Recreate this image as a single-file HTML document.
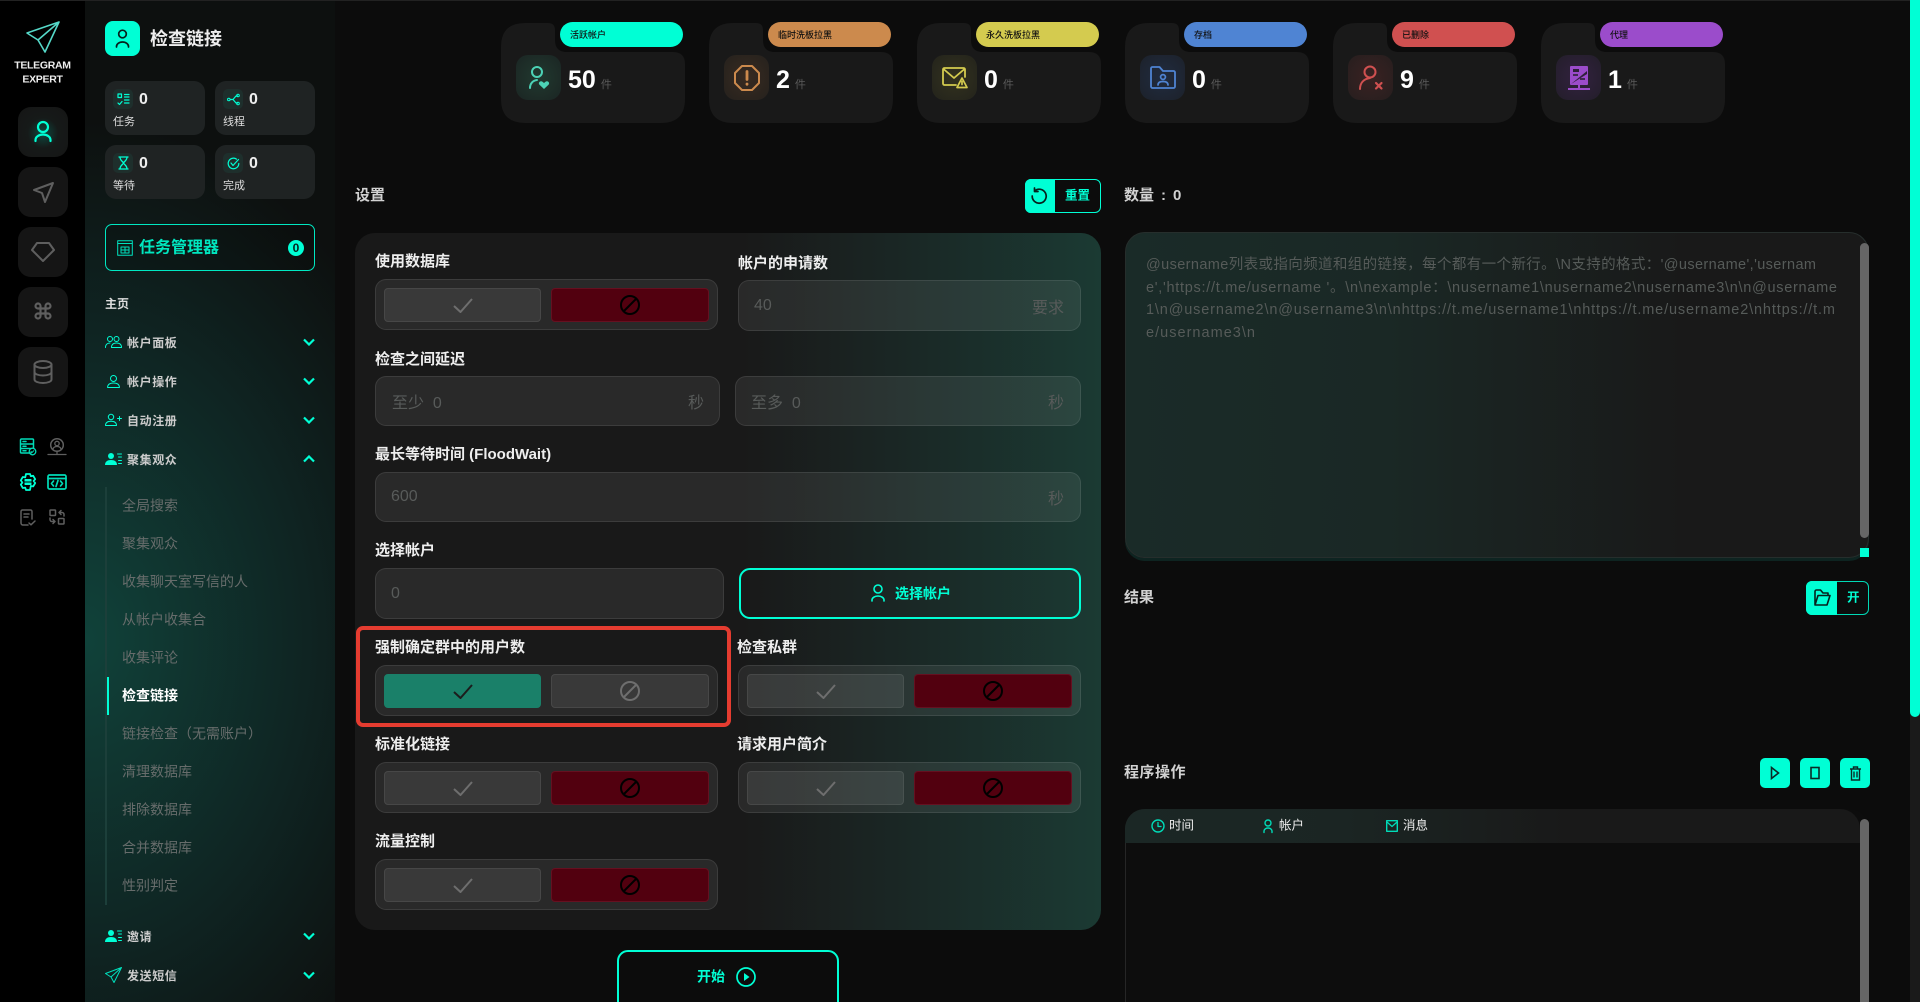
<!DOCTYPE html>
<html lang="zh-CN"><head><meta charset="utf-8"><title>检查链接</title>
<style>
*{box-sizing:border-box}
html,body{margin:0;padding:0;width:1920px;height:1002px;overflow:hidden;background:#0c0c0c;font-family:"Liberation Sans","Noto Sans CJK SC",sans-serif;color:#fff}
#w{position:relative;width:1920px;height:1002px;overflow:hidden;background:#0c0c0c}
.a{position:absolute}
.t{position:absolute;transform:translateY(-50%);white-space:nowrap;line-height:1.2}
svg{display:block;overflow:visible}
.s{fill:none;stroke:currentColor;stroke-linecap:round;stroke-linejoin:round}
.rb{position:absolute;left:18px;width:50px;height:50px;border-radius:13px;background:#151515}
.mini{position:absolute;width:100px;height:54px;border-radius:11px;background:#1f2323}
.mini .ic{position:absolute;left:8px;top:8px;width:20px;height:20px;border-radius:5px;background:#1e2f2c;color:#00ffd5;display:flex;align-items:center;justify-content:center}
.mini b{position:absolute;left:34px;top:9px;font-size:16px;line-height:20px;font-weight:700;color:#eee}
.mini span{position:absolute;left:8px;top:34px;font-size:11px;line-height:15px;color:#ddd}
.mh{font-size:12px;font-weight:700;letter-spacing:.6px;color:#ccc;left:127px}
.sub{font-size:14px;color:#676c6b;left:122px}
.chev{position:absolute;left:303px;width:12px;height:8px;color:#00ffd5}
.stat{position:absolute;top:23px;width:184px;height:100px}
.stat .pill{position:absolute;left:59px;top:-1px;width:123px;height:25px;border-radius:12.5px;font-size:9px;font-weight:500;line-height:26px;padding-left:10px;color:#111}
.stat .tile{position:absolute;left:15px;top:32px;width:45px;height:45px;border-radius:12px;display:flex;align-items:center;justify-content:center}
.stat .num{position:absolute;left:67px;top:44px;line-height:26px;font-size:25px;font-weight:700;white-space:nowrap}
.stat .num small{font-size:11px;font-weight:400;color:#5a5a5a;margin-left:5px;vertical-align:0}
.lb{font-size:15px;font-weight:700;color:#eee;margin-top:1.5px}
.h{font-size:15px;font-weight:700;color:#d2d2d2}
.tg,.inp{position:absolute;background:rgba(255,255,255,.07);border:1px solid rgba(255,255,255,.09);border-radius:11px;height:51px}
.tg{width:343px}
.tg i{position:absolute;top:8px;height:34px;border-radius:4px;display:flex;align-items:center;justify-content:center;background:rgba(255,255,255,.08);border:1px solid rgba(255,255,255,.07);color:#6e6e6e}
.tg i.y{left:8px;width:157px}.tg i.n{left:175px;width:158px}
.tg i.r{background:#52000f;border-color:#651020;color:#000}
.tg i.g{background:#1a8069;border-color:#1a8069;color:#1c1c1c}
.inp{font-size:16px;color:#585b5a}
.inp span{position:absolute;top:50%;transform:translateY(-50%);white-space:nowrap}
.tbtn{position:absolute;background:#00ffd5;border-radius:5px;width:30px;height:30px;top:758px;display:flex;align-items:center;justify-content:center;color:#0b2b27}
</style></head><body><div id="w">
<svg width="0" height="0" style="position:absolute"><defs>
<symbol id="ck" viewBox="0 0 20 15"><path d="M1 8l6.5 6L19 1" fill="none" stroke="currentColor" stroke-width="2"/></symbol>
<symbol id="ban" viewBox="0 0 20 20"><circle cx="10" cy="10" r="9" fill="none" stroke="currentColor" stroke-width="2"/><path d="M16 4L4 16" fill="none" stroke="currentColor" stroke-width="2"/></symbol>
<symbol id="dn" viewBox="0 0 12 8"><path d="M1 1.5l5 5 5-5" fill="none" stroke="currentColor" stroke-width="2.2"/></symbol>
<symbol id="card" viewBox="0 0 184 100"><path d="M24 0H47Q54 0 54 7V17Q54 29 66 29H172Q184 29 184 41V76Q184 100 160 100H24Q0 100 0 76V24Q0 0 24 0Z" fill="#191919"/></symbol>
</defs></svg>

<!-- left rail -->
<div class="a" style="left:0;top:0;width:85px;height:1002px;background:#000"></div>
<!-- sidebar -->
<div class="a" style="left:85px;top:0;width:250px;height:1002px;background:radial-gradient(ellipse 370px 520px at 0 640px,#10423a 0%,#0f2422 60%,#0d100f 100%),#0d100f"></div>
<div class="a" style="left:0;top:0;width:1920px;height:1px;background:#222"></div>

<svg class="a" style="left:26px;top:20px;color:#55d8c8" width="36" height="34" viewBox="0 0 36 34"><path class="s" stroke-width="1.6" d="M33 2L1 13l11 7 7 12zM33 2L12 20"/></svg>
<div class="t" style="left:0;width:85px;text-align:center;top:66px;font-size:10.5px;font-weight:700;color:#eee;letter-spacing:-.3px">TELEGRAM</div>
<div class="t" style="left:0;width:85px;text-align:center;top:80px;font-size:10.5px;font-weight:700;color:#eee;letter-spacing:-.3px">EXPERT</div>

<div class="rb" style="top:107px;background:radial-gradient(circle at 50% 52%,#0d4a40 0,#161a19 42%,#151515 100%)"><svg class="a" style="left:16px;top:13px;color:#00ffd5" width="18" height="24" viewBox="0 0 18 24"><circle class="s" stroke-width="2.2" cx="9" cy="7" r="5"/><path class="s" stroke-width="2.2" d="M1.5 21v-1a7.5 5.5 0 0 1 15 0v1"/></svg></div>
<div class="rb" style="top:167px"><svg class="a" style="left:15px;top:15px;color:#5f5f5f" width="21" height="21" viewBox="0 0 21 21"><path class="s" stroke-width="2" d="M20 1L1 8l8 3 3 9z"/></svg></div>
<div class="rb" style="top:227px"><svg class="a" style="left:13px;top:15px;color:#5f5f5f" width="24" height="20" viewBox="0 0 24 20"><path class="s" stroke-width="2" d="M6 1h12l5 7-11 11L1 8z"/></svg></div>
<div class="rb" style="top:287px"><svg class="a" style="left:15px;top:14px;color:#5f5f5f" width="20" height="20" viewBox="0 0 24 24"><path class="s" stroke-width="2.6" d="M15 6v12a3 3 0 1 0 3-3H6a3 3 0 1 0 3 3V6a3 3 0 1 0-3 3h12a3 3 0 1 0-3-3"/></svg></div>
<div class="rb" style="top:347px"><svg class="a" style="left:15px;top:13px;color:#5f5f5f" width="20" height="24" viewBox="0 0 20 24"><ellipse class="s" stroke-width="2" cx="10" cy="4.5" rx="8.5" ry="3.5"/><path class="s" stroke-width="2" d="M1.5 4.5v15c0 2 3.8 3.5 8.500 3.500s8.500-1.500 8.500-3.500v-15M1.500 12c0 2 3.800 3.500 8.500 3.500s8.500-1.500 8.500-3.500"/></svg></div>

<svg class="a" style="left:19px;top:438px;color:#00dcb8" width="18" height="18" viewBox="0 0 18 18"><path class="s" stroke-width="1.500" d="M12 15H2.500a1 1 0 0 1-1-1V2a1 1 0 0 1 1-1h11a1 1 0 0 1 1 1v8M1.500 6h13M1.500 10.500h10M4 3.500h3M4 8.200h3M4 12.800h3"/><circle class="s" stroke-width="1.300" cx="13.500" cy="13.500" r="3.300"/><path class="s" d="M12 13.500l1 1 1.800-1.800"/></svg>
<svg class="a" style="left:48px;top:438px;color:#5f5f5f" width="18" height="18" viewBox="0 0 18 18"><circle class="s" stroke-width="1.500" cx="9" cy="7" r="6.300"/><circle class="s" stroke-width="1.300" cx="9" cy="5.500" r="2.200"/><path class="s" stroke-width="1.300" d="M5 11c.6-2 2-2.500 4-2.500s3.400.5 4 2.500M0 16.500h18M9 13v3.500"/></svg>
<svg class="a" style="left:19px;top:473px;color:#00ffd5" width="18" height="18" viewBox="0 0 18 18"><path class="s" stroke-width="1.800" d="M7 1h4l.8 2.200 2.400-.4 2 3.400-1.600 1.800 1.600 2-2 3.400-2.400-.4L11 17H7l-.8-2.400-2.400.4-2-3.400L3.400 9.600 1.800 7.400l2-3.400 2.400.4z"/><rect x="5.500" y="6" width="7" height="6" rx=".6" fill="#00ffd5"/><path d="M5.500 9h7" stroke="#000" stroke-width="1"/></svg>
<svg class="a" style="left:47px;top:474px;color:#00dcb8" width="20" height="16" viewBox="0 0 20 16"><rect class="s" stroke-width="1.700" x="1" y="1" width="18" height="14" rx="1.500"/><path class="s" stroke-width="1.700" d="M1 4.500h18M6.500 7l-2 2.500 2 2.500M13.500 7l2 2.500-2 2.500M11 6.500L9 12.500"/></svg>
<svg class="a" style="left:20px;top:509px;color:#5f5f5f" width="16" height="17" viewBox="0 0 16 17"><path class="s" stroke-width="1.500" d="M8 16H3a2 2 0 0 1-2-2V2.500A1.500 1.500 0 0 1 2.500 1h8A1.500 1.500 0 0 1 12 2.500V10M4 5h5M4 8h4M9 14l2 1.800 4-3.800"/></svg>
<svg class="a" style="left:49px;top:509px;color:#5f5f5f" width="16" height="16" viewBox="0 0 16 16"><rect class="s" stroke-width="1.500" x="1" y="1" width="5.500" height="5.500" rx=".6"/><rect class="s" stroke-width="1.500" x="9.500" y="9.500" width="5.500" height="5.500" rx=".6"/><path class="s" stroke-width="1.500" d="M10 3.500l2-2M10 3.500h3a2 2 0 0 1 2 2V7M10 3.500l2 2M6 12.500l-2 2M6 12.500H3a2 2 0 0 1-2-2V9M6 12.500l-2-2"/></svg>

<!-- sidebar content -->
<div class="a" style="left:105px;top:21px;width:35px;height:35px;border-radius:8px;background:#00ffd5"><svg class="a" style="left:10px;top:8px;color:#06201c" width="15" height="20" viewBox="0 0 15 20"><circle class="s" stroke-width="1.700" cx="7.500" cy="5" r="3.800"/><path class="s" stroke-width="1.700" d="M1.500 18v-.500a6 4.500 0 0 1 12 0v.500"/></svg></div>
<div class="t" style="left:150px;top:40px;font-size:18px;font-weight:700;color:#eee">检查链接</div>

<div class="mini" style="left:105px;top:81px"><div class="ic"><svg width="13" height="13" viewBox="0 0 13 13"><path class="s" stroke-width="1.200" d="M1 1h3.500v3.500H1zM7.500 1.500H12M7.500 4H12M7.500 7H12M7.500 10H12M1 10l1.500 1.500L5 8.500"/></svg></div><b>0</b><span>任务</span></div>
<div class="mini" style="left:215px;top:81px"><div class="ic"><svg width="13" height="13" viewBox="0 0 13 13"><path class="s" stroke-width="1.200" d="M3 6.500h3l3-3.500h1.500M6 6.500l3 3.500h1.500"/><circle cx="1.800" cy="6.500" r="1.300" class="s"/><circle cx="11" cy="2.500" r="1.300" class="s"/><circle cx="11" cy="10.500" r="1.300" class="s"/></svg></div><b>0</b><span>线程</span></div>
<div class="mini" style="left:105px;top:145px"><div class="ic"><svg width="11" height="14" viewBox="0 0 11 14"><path class="s" stroke-width="1.300" d="M1 1h9M1 13h9M2 1c0 3.500 2.500 4 3.500 6 1-2 3.500-2.500 3.500-6M2 13c0-3.500 2.500-4 3.500-6 1 2 3.500 2.500 3.500 6"/></svg></div><b>0</b><span>等待</span></div>
<div class="mini" style="left:215px;top:145px"><div class="ic"><svg width="13" height="13" viewBox="0 0 13 13"><path class="s" stroke-width="1.200" d="M11.800 6.500a5.300 5.300 0 1 1-2.300-4.400M4 6l2 2.500 5.500-6"/></svg></div><b>0</b><span>完成</span></div>

<div class="a" style="left:105px;top:224px;width:210px;height:47px;border:1.500px solid #00e8c2;border-radius:7px;background:rgba(0,0,0,.12)"></div>
<svg class="a" style="left:117px;top:240px;color:#00e0bd" width="16" height="16" viewBox="0 0 16 16"><rect class="s" x=".7" y=".7" width="14.600" height="14.600"/><path class="s" d="M.7 3.500h14.600M4 7h8M4 10h8M4 13h8M4 7v6M12 7v6M8 7v6"/></svg>
<div class="t" style="left:139px;top:248px;font-size:16px;font-weight:700;color:#00e6bf">任务管理器</div>
<div class="a" style="left:288px;top:240px;width:16px;height:16px;border-radius:8px;background:#00ffd5;color:#06201c;font-size:12px;font-weight:700;line-height:16px;text-align:center">0</div>

<div class="t" style="left:105px;top:304px;font-size:12px;font-weight:700;color:#ddd">主页</div>

<svg class="a" style="left:105px;top:336px;color:#00ffd5" width="17" height="12" viewBox="0 0 17 12"><circle class="s" cx="5" cy="3" r="2.500"/><circle class="s" cx="11.500" cy="3" r="2.500"/><path class="s" d="M.5 11.500c0-3 2-4.500 4.500-4.500M6.500 11.500c0-3 2-4.500 5-4.500s5 1.500 5 4.500z"/></svg>
<div class="t mh" style="top:343px">帐户面板</div><svg class="chev" style="top:338px"><use href="#dn"/></svg>
<svg class="a" style="left:107px;top:375px;color:#00ffd5" width="13" height="13" viewBox="0 0 13 13"><circle class="s" cx="6.500" cy="3.500" r="3"/><path class="s" d="M.6 12.500c0-3 2-4.500 5.900-4.500s5.900 1.500 5.900 4.500z"/></svg>
<div class="t mh" style="top:382px">帐户操作</div><svg class="chev" style="top:377px"><use href="#dn"/></svg>
<svg class="a" style="left:105px;top:414px;color:#00ffd5" width="17" height="12" viewBox="0 0 17 12"><circle class="s" cx="6" cy="3" r="2.700"/><path class="s" d="M.5 11.500c0-3 2-4.300 5.500-4.300s5.500 1.300 5.500 4.300zM12.500 4.500h4M14.500 2.500v4"/></svg>
<div class="t mh" style="top:421px">自动注册</div><svg class="chev" style="top:416px"><use href="#dn"/></svg>
<svg class="a" style="left:105px;top:453px;color:#00ffd5" width="17" height="12" viewBox="0 0 17 12"><circle cx="6" cy="3" r="3" fill="currentColor"/><path fill="currentColor" d="M0 12c0-3.500 2.500-5 6-5s6 1.500 6 5z"/><path class="s" d="M12.500 1h4M13.500 4h3M13.500 7.500h3M13.500 10.500h3"/></svg>
<div class="t mh" style="top:460px">聚集观众</div><svg class="chev" style="top:455px;transform:scaleY(-1)"><use href="#dn"/></svg>

<div class="a" style="left:105px;top:487px;width:2px;height:418px;background:#1c3f3a"></div>
<div class="a" style="left:107px;top:677px;width:2px;height:38px;background:#00ffd5"></div>
<div class="t sub" style="top:506px">全局搜索</div>
<div class="t sub" style="top:544px">聚集观众</div>
<div class="t sub" style="top:582px">收集聊天室写信的人</div>
<div class="t sub" style="top:620px">从帐户收集合</div>
<div class="t sub" style="top:658px">收集评论</div>
<div class="t sub" style="top:696px;color:#fff;font-weight:700">检查链接</div>
<div class="t sub" style="top:734px">链接检查（无需账户）</div>
<div class="t sub" style="top:772px">清理数据库</div>
<div class="t sub" style="top:810px">排除数据库</div>
<div class="t sub" style="top:848px">合并数据库</div>
<div class="t sub" style="top:886px">性别判定</div>

<svg class="a" style="left:105px;top:930px;color:#00ffd5" width="17" height="12" viewBox="0 0 17 12"><circle cx="6" cy="3" r="3" fill="currentColor"/><path fill="currentColor" d="M0 12c0-3.500 2.500-5 6-5s6 1.500 6 5z"/><path class="s" d="M12.500 1h4M13.500 4h3M13.500 7.500h3M13.500 10.500h3"/></svg>
<div class="t mh" style="top:937px">邀请</div><svg class="chev" style="top:932px"><use href="#dn"/></svg>
<svg class="a" style="left:105px;top:967px;color:#00e0bd" width="17" height="16" viewBox="0 0 17 16"><path class="s" d="M16.500.5L.5 6.500l5.500 3.500 3 5.500zM16.500.5L6 10"/></svg>
<div class="t mh" style="top:976px">发送短信</div><svg class="chev" style="top:971px"><use href="#dn"/></svg>

<!-- stat cards -->
<div class="stat" style="left:501px"><svg width="184" height="100"><use href="#card"/></svg><div class="pill" style="background:#00ffd5">活跃帐户</div><div class="tile" style="background:radial-gradient(circle,#21392f,#1b2523)"><svg width="24" height="26" viewBox="0 0 24 26" style="color:#4cd2b5"><circle class="s" stroke-width="2" cx="10" cy="7" r="5"/><path class="s" stroke-width="2" d="M3 23c0-4 2.500-7.500 7-8"/><path fill="currentColor" d="M17 24l-4.500-4.200c-1.800-2 .8-4.800 3-3l1.500 1.200 1.500-1.200c2.200-1.800 4.800 1 3 3z"/></svg></div><div class="num">50<small>件</small></div></div>

<div class="stat" style="left:709px"><svg width="184" height="100"><use href="#card"/></svg><div class="pill" style="background:#cc8a4d">临时洗板拉黑</div><div class="tile" style="background:radial-gradient(circle,#382b21,#25211d)"><svg width="26" height="26" viewBox="0 0 26 26" style="color:#cc8a4d"><path class="s" stroke-width="2" d="M8 1h10l7 7v10l-7 7H8l-7-7V8z"/><path class="s" stroke-width="2.800" d="M13 6.500v8M13 19v.2"/></svg></div><div class="num">2<small>件</small></div></div>

<div class="stat" style="left:917px"><svg width="184" height="100"><use href="#card"/></svg><div class="pill" style="background:#d4cb4f">永久洗板拉黑</div><div class="tile" style="background:radial-gradient(circle,#33321e,#23231c)"><svg width="26" height="22" viewBox="0 0 26 22" style="color:#d4cb4f"><path class="s" stroke-width="1.800" d="M14 18H2.500a1.500 1.500 0 0 1-1.500-1.500V2.500A1.500 1.500 0 0 1 2.500 1h19A1.500 1.500 0 0 1 23 2.500V10M1.500 2l10.500 9 10.500-9"/><path class="s" stroke-width="1.700" d="M20 11l-5 9.500h10zM20 14.500v3"/></svg></div><div class="num">0<small>件</small></div></div>

<div class="stat" style="left:1125px"><svg width="184" height="100"><use href="#card"/></svg><div class="pill" style="background:#4f84d3">存档</div><div class="tile" style="background:radial-gradient(circle,#212c40,#1c212a)"><svg width="26" height="23" viewBox="0 0 26 23" style="color:#4f84d3"><path class="s" stroke-width="1.800" d="M1 2.500A1.500 1.500 0 0 1 2.500 1h7L13 5h10.500A1.500 1.500 0 0 1 25 6.500v14a1.500 1.500 0 0 1-1.500 1.500h-21A1.500 1.500 0 0 1 1 20.500z"/><circle class="s" stroke-width="1.700" cx="13" cy="11" r="2.400"/><path class="s" stroke-width="1.700" d="M8 19c0-2.500 2-3.500 5-3.500s5 1 5 3.500"/></svg></div><div class="num">0<small>件</small></div></div>

<div class="stat" style="left:1333px"><svg width="184" height="100"><use href="#card"/></svg><div class="pill" style="background:#d05050">已删除</div><div class="tile" style="background:radial-gradient(circle,#3a2222,#261e1e)"><svg width="24" height="25" viewBox="0 0 24 25" style="color:#d05050"><circle class="s" stroke-width="2" cx="11" cy="7" r="5.500"/><path class="s" stroke-width="2" d="M1 24c0-6 3.500-10 10-11"/><path class="s" stroke-width="2.200" d="M17 18l5.500 5.500M22.500 18L17 23.500"/></svg></div><div class="num">9<small>件</small></div></div>

<div class="stat" style="left:1541px"><svg width="184" height="100"><use href="#card"/></svg><div class="pill" style="background:#9b4ccb">代理</div><div class="tile" style="background:radial-gradient(circle,#32213f,#231e2a)"><svg width="22" height="26" viewBox="0 0 22 26" style="color:#9b4ccb"><path fill="currentColor" fill-rule="evenodd" d="M3 1h16a1 1 0 0 1 1 1v17a1 1 0 0 1-1 1H3a1 1 0 0 1-1-1V2a1 1 0 0 1 1-1zM5 4v3h6V4zM3 19L19 9V6z"/><path stroke="currentColor" stroke-width="2" d="M0 24h22M11 20v5"/><path stroke="#231e2a" stroke-width="1.500" d="M12 14h5M5 10h5"/></svg></div><div class="num">1<small>件</small></div></div>

<!-- settings header -->
<div class="t h" style="left:355px;top:196px">设置</div>
<div class="a" style="left:1025px;top:179px;width:76px;height:34px;border:1px solid #00ffd5;border-radius:6px"></div>
<div class="a" style="left:1025px;top:179px;width:30px;height:34px;background:#00ffd5;border-radius:6px 0 0 6px"><svg class="a" style="left:6px;top:8px;color:#06201c" width="17" height="18" viewBox="0 0 17 18"><path class="s" stroke-width="1.700" d="M3.500 4a7 7 0 1 1-2.300 5M3.500 1v3.500H7"/></svg></div>
<div class="t" style="left:1065px;top:196px;font-size:12.500px;font-weight:700;color:#00ffd5">重置</div>

<!-- panel -->
<div class="a" style="left:355px;top:233px;width:746px;height:697px;border-radius:20px;background:linear-gradient(90deg,#191919 0%,#191919 52%,#1a2624 72%,#1b3a33 100%)"></div>

<div class="t lb" style="left:375px;top:260px">使用数据库</div>
<div class="t lb" style="left:738px;top:262px">帐户的申请数</div>
<div class="tg" style="left:375px;top:279px"><i class="y"><svg width="20" height="15"><use href="#ck"/></svg></i><i class="n r"><svg width="20" height="20"><use href="#ban"/></svg></i></div>
<div class="inp" style="left:738px;top:280px;width:343px"><span style="left:15px">40</span><span style="right:16px">要求</span></div>

<div class="t lb" style="left:375px;top:358px">检查之间延迟</div>
<div class="inp" style="left:375px;top:376px;width:345px;height:50px"><span style="left:16px">至少&nbsp;&nbsp;0</span><span style="right:15px">秒</span></div>
<div class="inp" style="left:735px;top:376px;width:346px;height:50px"><span style="left:15px">至多&nbsp;&nbsp;0</span><span style="right:16px">秒</span></div>

<div class="t lb" style="left:375px;top:453px">最长等待时间 (FloodWait)</div>
<div class="inp" style="left:375px;top:472px;width:706px;height:50px"><span style="left:15px">600</span><span style="right:16px">秒</span></div>

<div class="t lb" style="left:375px;top:549px">选择帐户</div>
<div class="inp" style="left:375px;top:568px;width:349px"><span style="left:15px">0</span></div>
<div class="a" style="left:739px;top:568px;width:342px;height:51px;border:2px solid #00ffd5;border-radius:11px"></div>
<svg class="a" style="left:871px;top:584px;color:#00ffd5" width="14" height="18" viewBox="0 0 14 18"><circle class="s" stroke-width="1.600" cx="7" cy="5" r="4"/><path class="s" stroke-width="1.600" d="M1 17v-1a6 4 0 0 1 12 0v1"/></svg>
<div class="t" style="left:895px;top:594px;font-size:14px;font-weight:700;color:#00ffd5">选择帐户</div>

<div class="a" style="left:356px;top:626px;width:375px;height:101px;border:4px solid #e53c30;border-radius:7px"></div>
<div class="t lb" style="left:375px;top:646px">强制确定群中的用户数</div>
<div class="t lb" style="left:737px;top:646px">检查私群</div>
<div class="tg" style="left:375px;top:665px"><i class="y g"><svg width="20" height="15"><use href="#ck"/></svg></i><i class="n"><svg width="20" height="20"><use href="#ban"/></svg></i></div>
<div class="tg" style="left:738px;top:665px"><i class="y"><svg width="20" height="15"><use href="#ck"/></svg></i><i class="n r"><svg width="20" height="20"><use href="#ban"/></svg></i></div>

<div class="t lb" style="left:375px;top:743px">标准化链接</div>
<div class="t lb" style="left:737px;top:743px">请求用户简介</div>
<div class="tg" style="left:375px;top:762px"><i class="y"><svg width="20" height="15"><use href="#ck"/></svg></i><i class="n r"><svg width="20" height="20"><use href="#ban"/></svg></i></div>
<div class="tg" style="left:738px;top:762px"><i class="y"><svg width="20" height="15"><use href="#ck"/></svg></i><i class="n r"><svg width="20" height="20"><use href="#ban"/></svg></i></div>

<div class="t lb" style="left:375px;top:840px">流量控制</div>
<div class="tg" style="left:375px;top:859px"><i class="y"><svg width="20" height="15"><use href="#ck"/></svg></i><i class="n r"><svg width="20" height="20"><use href="#ban"/></svg></i></div>

<div class="a" style="left:617px;top:950px;width:222px;height:70px;border:2px solid #00ffd5;border-radius:11px"></div>
<div class="t" style="left:697px;top:977px;font-size:14px;font-weight:700;color:#00ffd5">开始</div>
<svg class="a" style="left:736px;top:967px;color:#00ffd5" width="20" height="20" viewBox="0 0 20 20"><circle class="s" stroke-width="1.700" cx="10" cy="10" r="9"/><path fill="currentColor" d="M8 6l5.500 4L8 14z"/></svg>

<!-- right column -->
<div class="t h" style="left:1124px;top:196px">数量</div>
<div class="t h" style="left:1161px;top:196px">:</div>
<div class="t h" style="left:1173px;top:196px">0</div>
<div class="a" style="left:1125px;top:232px;width:744px;height:326px;border-radius:20px;border:1px solid #262e2c;background:linear-gradient(90deg,#1a2b28 0%,#1a2825 35%,#191919 75%);box-shadow:0 3px 0 #0e2421"></div>
<svg class="a" style="left:1125px;top:232px" width="744" height="326" font-family="Liberation Sans,Noto Sans CJK SC,sans-serif" font-size="14.5" fill="#565b59">
<text x="21" y="37" textLength="670" lengthAdjust="spacing">@username列表或指向频道和组的链接，每个都有一个新行。\N支持的格式：'@username','usernam</text>
<text x="21" y="60" textLength="691" lengthAdjust="spacing">e','https://t.me/username '。\n\nexample：\nusername1\nusername2\nusername3\n\n@username</text>
<text x="21" y="82" textLength="689" lengthAdjust="spacing">1\n@username2\n@username3\n\nhttps://t.me/username1\nhttps://t.me/username2\nhttps://t.m</text>
<text x="21" y="105" textLength="109" lengthAdjust="spacing">e/username3\n</text>
</svg>
<div class="a" style="left:1860px;top:243px;width:9px;height:295px;border-radius:4.500px;background:#666"></div>
<div class="a" style="left:1860px;top:548px;width:9px;height:9px;background:#00ffd5"></div>

<div class="t h" style="left:1124px;top:598px">结果</div>
<div class="a" style="left:1806px;top:581px;width:63px;height:34px;border:1px solid #00d8b5;border-radius:6px"></div>
<div class="a" style="left:1806px;top:581px;width:31px;height:34px;background:#00ffd5;border-radius:6px 0 0 6px"><svg class="a" style="left:7px;top:8px;color:#06201c" width="18" height="18" viewBox="0 0 18 18"><path class="s" stroke-width="1.600" d="M2 15.500V2.500A1.500 1.500 0 0 1 3.500 1h4L10 4h5v2.500M2 16h12l3-9.500H5z"/></svg></div>
<div class="t" style="left:1847px;top:598px;font-size:12.500px;color:#00ffd5;font-weight:700">开</div>

<div class="t h" style="left:1124px;top:773px;letter-spacing:.5px">程序操作</div>
<div class="tbtn" style="left:1760px"><svg width="10" height="14" viewBox="0 0 10 14"><path d="M1.500 1.500L8.500 7l-7 5.500z" fill="none" stroke="currentColor" stroke-width="1.600"/></svg></div>
<div class="tbtn" style="left:1800px"><svg width="10" height="14" viewBox="0 0 10 14"><rect x="1" y="1.500" width="8" height="11" fill="none" stroke="currentColor" stroke-width="1.600"/></svg></div>
<div class="tbtn" style="left:1840px"><svg width="13" height="15" viewBox="0 0 13 15"><path d="M1 3h11M4.500 3V1h4v2M2.500 3v11h8V3M5 5.500v6M8 5.500v6" fill="none" stroke="currentColor" stroke-width="1.400"/></svg></div>

<div class="a" style="left:1125px;top:809px;width:744px;height:193px;border-radius:20px 20px 0 0;background:#0d0d0d;border-left:1px solid #262626"></div>
<div class="a" style="left:1125px;top:809px;width:735px;height:34px;border-radius:20px 20px 0 0;background:linear-gradient(90deg,#1b2725 0%,#1b2523 30%,#191919 60%)"></div>
<svg class="a" style="left:1151px;top:819px;color:#00dcb8" width="14" height="14" viewBox="0 0 14 14"><circle class="s" stroke-width="1.400" cx="7" cy="7" r="6"/><path class="s" stroke-width="1.300" d="M7 3.500V7.500H10"/></svg>
<div class="t" style="left:1169px;top:826px;font-size:12.500px;color:#eee">时间</div>
<svg class="a" style="left:1263px;top:819px;color:#00dcb8" width="10" height="14" viewBox="0 0 10 14"><circle class="s" stroke-width="1.400" cx="5" cy="4" r="3"/><path class="s" stroke-width="1.400" d="M1 13.500v-1.500a4 3 0 0 1 8 0v1.500"/></svg>
<div class="t" style="left:1279px;top:826px;font-size:12.500px;color:#eee">帐户</div>
<svg class="a" style="left:1386px;top:820px;color:#00dcb8" width="12" height="12" viewBox="0 0 12 12"><rect class="s" stroke-width="1.400" x=".7" y=".7" width="10.600" height="10.600"/><path class="s" stroke-width="1.200" d="M1 2l5 4.500L11 2"/></svg>
<div class="t" style="left:1403px;top:826px;font-size:12.500px;color:#eee">消息</div>
<div class="a" style="left:1860px;top:819px;width:9px;height:183px;border-radius:4.500px 4.500px 0 0;background:#666"></div>

<!-- page scrollbar -->
<div class="a" style="left:1910px;top:0;width:10px;height:1002px;background:#1a1a1a"></div>
<div class="a" style="left:1910px;top:0;width:10px;height:717px;border-radius:0 0 5px 5px;background:#00ffd5"></div>
</div></body></html>
